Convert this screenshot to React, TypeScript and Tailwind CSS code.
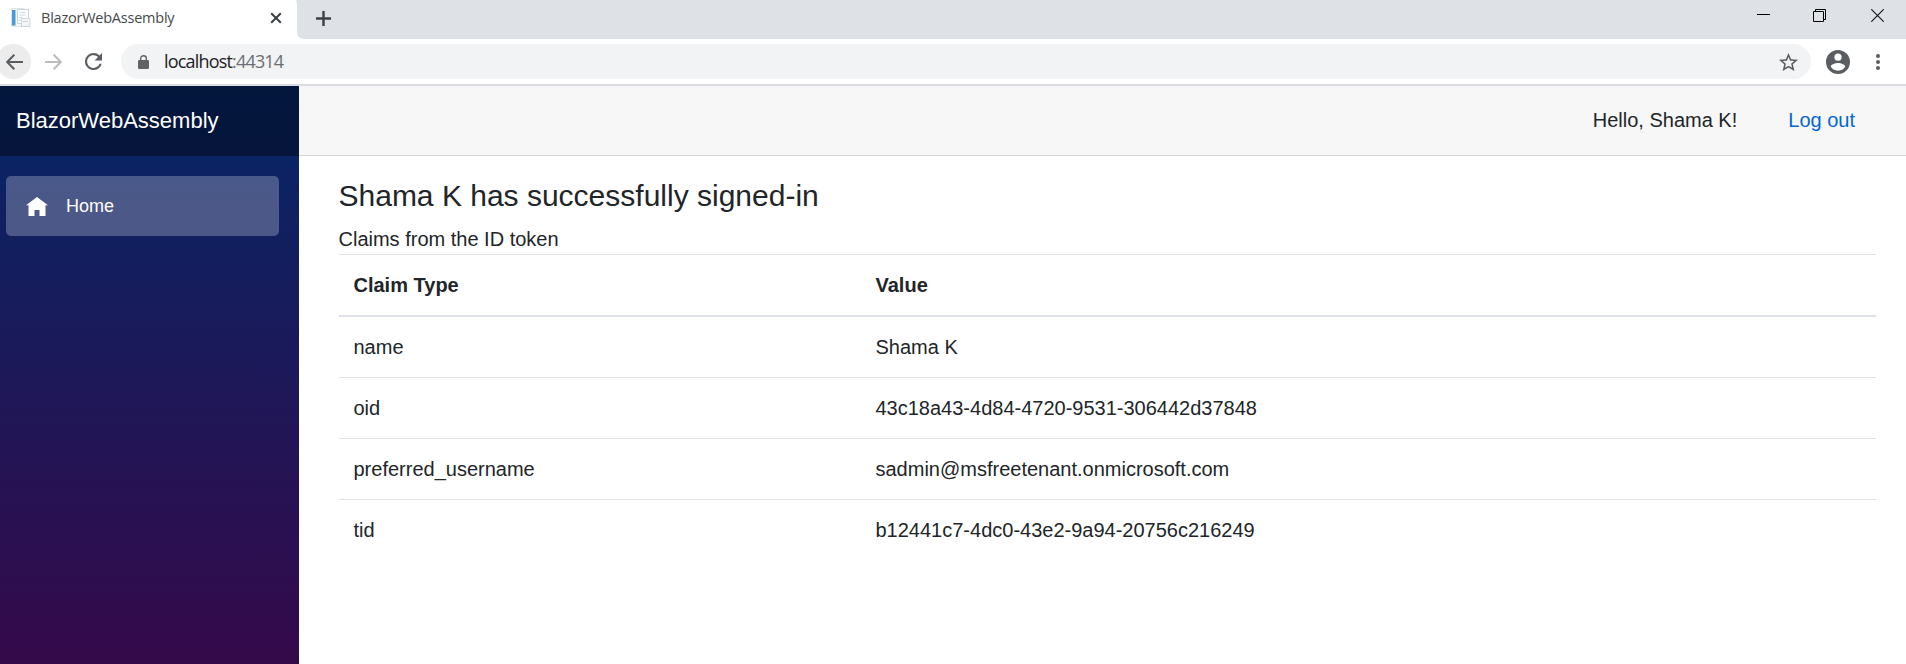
import React from "react";

const claims = [
  { type: "name", value: "Shama K" },
  { type: "oid", value: "43c18a43-4d84-4720-9531-306442d37848" },
  { type: "preferred_username", value: "sadmin@msfreetenant.onmicrosoft.com" },
  { type: "tid", value: "b12441c7-4dc0-43e2-9a94-20756c216249" },
];

function Favicon() {
  return (
    <svg width="20" height="20" viewBox="0 0 20 20" className="shrink-0">
      <path d="M.5 .5h12.500l4 3.500v14.500H.5z" fill="#f5f7f9" stroke="#e0e4e8" />
      <rect x="1" y="2" width="3.500" height="15.500" fill="#4a9bd4" />
      <rect x="6.500" y="1.500" width="11" height="14" fill="#fafbfc" stroke="#cdd5dc" />
      <path d="M8.500 4.500h6M8.500 7h6M8.500 9.500h3M7 12.500h3" stroke="#d3dae0" />
      <rect x="10.500" y="10.500" width="8.500" height="8" fill="#f3f5f7" stroke="#cdd4db" />
      <path d="M12 13.500h5" stroke="#cdd4db" />
    </svg>
  );
}

function TabStrip() {
  return (
    <div className="flex h-[39px] bg-[#dee1e6]">
      <div className="flex h-full w-[296px] items-center bg-white pl-[11px] pb-[3px]">
        <Favicon />
        <span className="ml-[10px] w-[180px] whitespace-nowrap text-[14.500px] tracking-[-0.230px] text-[#45494d] font-['Open_Sans',sans-serif]">
          BlazorWebAssembly
        </span>
        <svg width="12" height="12" viewBox="0 0 12 12" className="ml-[49px] shrink-0">
          <path d="M1.200 1.200l9.600 9.600M10.800 1.200l-9.600 9.600" stroke="#3c4043" strokeWidth="2" />
        </svg>
      </div>
      <svg width="10" height="39" viewBox="0 0 10 39">
        <path d="M0 0Q1 2 1 8V31Q1 39 9 39H0z" fill="#fff" />
      </svg>
      <div className="flex grow items-center pl-[10px] pb-[3px]">
        <svg width="15" height="15" viewBox="0 0 15 15">
          <path d="M7.500 0v15M0 7.500h15" stroke="#3c4043" strokeWidth="2.400" />
        </svg>
      </div>
      <div className="flex items-start pr-[22px] pt-[9px]">
        <svg width="13" height="13" viewBox="0 0 13 13" className="mr-[43px]">
          <path d="M0 5.500h13" stroke="#000" />
        </svg>
        <svg width="13" height="13" viewBox="0 0 13 13" className="mr-[45px]">
          <path d="M.5 2.500h10v10h-10zM2.500 2.500v-2h10v10h-2" fill="none" stroke="#000" />
        </svg>
        <svg width="13" height="13" viewBox="0 0 13 13">
          <path d="M.3 .3l12.400 12.400M12.700 .3L.3 12.700" stroke="#111" strokeWidth="1.100" />
        </svg>
      </div>
    </div>
  );
}

function Toolbar() {
  return (
    <div className="flex h-[47px] items-center border-b-2 border-[#dadce0] bg-white">
      <div className="-ml-1 flex h-[35px] w-[35px] items-center justify-center rounded-full bg-[#ececec]">
        <svg width="17" height="16" viewBox="0 0 17 16" className="ml-px">
          <path d="M17 8H1.500M8.300 .8L1.200 8l7.100 7.200" fill="none" stroke="#5a5e62" strokeWidth="2" />
        </svg>
      </div>
      <svg width="17" height="16" viewBox="0 0 17 16" className="ml-[14px]">
        <path d="M0 8h15.500M8.700 .8L15.800 8l-7.100 7.200" fill="none" stroke="#b9bbbd" strokeWidth="2" />
      </svg>
      <svg width="17" height="17" viewBox="4 4 16 16" className="ml-[23px]">
        <path
          d="M17.650 6.350A7.960 7.960 0 0 0 12 4a8 8 0 1 0 7.730 10h-2.080A6 6 0 1 1 12 6c1.660 0 3.140.69 4.220 1.780L13 11h7V4z"
          fill="#5a5e62"
        />
      </svg>
      <div className="ml-[19px] flex h-[35px] w-[1690px] items-center rounded-full bg-[#f1f3f4] pl-[17px] pr-[13px]">
        <svg width="11" height="14" viewBox="0 0 11 14">
          <path d="M2.700 6V3.400a2.800 2.600 0 0 1 5.600 0V6" fill="none" stroke="#5f6368" strokeWidth="1.400" />
          <rect x="0" y="5" width="11" height="9" rx="1.200" fill="#5f6368" />
        </svg>
        <span className="ml-[15px] grow whitespace-nowrap pb-px text-[18px] tracking-[-0.820px] text-[#6b6f73] font-['Open_Sans',sans-serif]">
          <span className="text-[#202124]">localhost</span>:44314
        </span>
        <svg width="19" height="18" viewBox="2 2 20 19" preserveAspectRatio="none">
          <path
            d="M22 9.240l-7.190-.62L12 2 9.190 8.630 2 9.240l5.460 4.730L5.820 21 12 17.270 18.180 21l-1.630-7.030zM12 15.400l-3.760 2.270 1-4.280-3.320-2.880 4.380-.38L12 6.100l1.710 4.040 4.380.38-3.320 2.880 1 4.280z"
            fill="#5a5e62"
          />
        </svg>
      </div>
      <svg width="24" height="24" viewBox="2 2 20 20" className="ml-[15px]">
        <path
          d="M12 2a10 10 0 1 0 0 20 10 10 0 0 0 0-20zm0 3a3 3 0 1 1 0 6 3 3 0 0 1 0-6zm0 14.200a7.200 7.200 0 0 1-6-3.220c.03-1.990 4-3.080 6-3.080s5.970 1.090 6 3.080a7.200 7.200 0 0 1-6 3.220z"
          fill="#5a5e62"
        />
      </svg>
      <svg width="6" height="18" viewBox="0 0 6 18" className="ml-[25px]">
        <g fill="#5a5e62">
          <circle cx="3" cy="3" r="2" />
          <circle cx="3" cy="9" r="2" />
          <circle cx="3" cy="15" r="2" />
        </g>
      </svg>
    </div>
  );
}

function Sidebar() {
  return (
    <aside className="w-[299px] shrink-0 bg-[linear-gradient(180deg,#052767_0px,#3a0647_640px)] text-white">
      <div className="flex h-[70px] items-center bg-black/40 pl-4">
        <span className="whitespace-nowrap text-[22px] leading-none">BlazorWebAssembly</span>
      </div>
      <nav className="pl-[6px] pt-5">
        <a className="flex h-[60px] w-[273px] items-center rounded-[5px] bg-white/25 pl-5">
          <svg width="22" height="19" viewBox="0 0 22 19">
            <path d="M11 0L0 8.300h2.500V19h6v-6h5v6h6V8.300H22z" fill="#fff" />
          </svg>
          <span className="ml-[18px] text-[18px]">Home</span>
        </a>
      </nav>
    </aside>
  );
}

export default function App() {
  return (
    <div className="flex h-[664px] w-[1906px] flex-col overflow-hidden bg-white text-[20px] leading-[30px] text-[#212529] font-['Liberation_Sans',Arial,sans-serif]">
      <TabStrip />
      <Toolbar />
      <div className="flex grow">
        <Sidebar />
        <main className="grow">
          <div className="flex h-[70px] items-center justify-end border-b border-[#d6d5d5] bg-[#f7f7f7] pb-[2px] pr-[51px]">
            <span>Hello, Shama K!</span>
            <a className="ml-[51px] text-[#0366d6]">Log out</a>
          </div>
          <div className="pl-10 pr-[30px] pt-[22px]">
            <h1 className="-ml-[0.5px] text-[30px] leading-9">Shama K has successfully signed-in</h1>
            <p className="-ml-[0.5px] mt-[10px]">Claims from the ID token</p>
            <table className="w-full table-fixed border-separate border-spacing-0 text-left">
              <colgroup>
                <col className="w-[522px]" />
                <col />
              </colgroup>
              <thead>
                <tr>
                  <th className="border-t border-b-2 border-[#dee2e6] px-[14.500px] py-[15px]">Claim Type</th>
                  <th className="border-t border-b-2 border-[#dee2e6] px-[14.500px] py-[15px]">Value</th>
                </tr>
              </thead>
              <tbody>
                {claims.map((c, i) => {
                  const cell =
                    i === 0 ? "px-[14.500px] py-[15px]" : "border-t border-[#dee2e6] px-[14.500px] py-[15px]";
                  return (
                    <tr key={c.type}>
                      <td className={cell}>{c.type}</td>
                      <td className={cell}>{c.value}</td>
                    </tr>
                  );
                })}
              </tbody>
            </table>
          </div>
        </main>
      </div>
    </div>
  );
}
